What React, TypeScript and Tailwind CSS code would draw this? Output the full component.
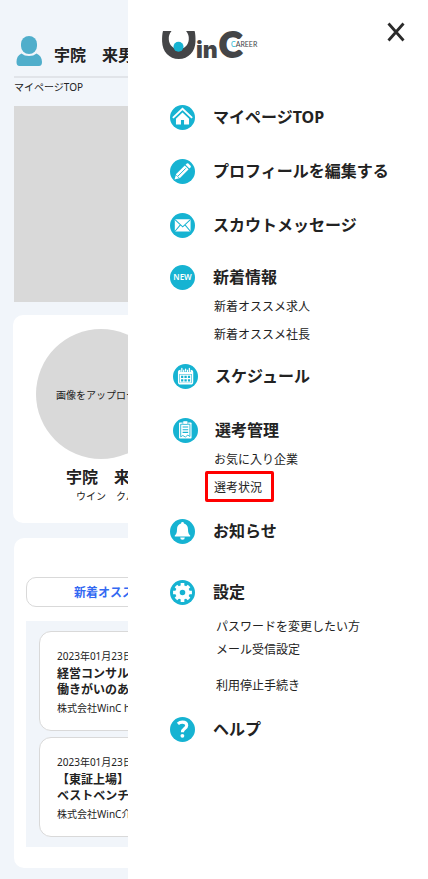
import React from "react";
import clsx from "clsx";

interface SubItem {
    label: string;
    className?: string;
    active?: boolean;
}

interface MenuItem {
    label: string;
    icon: React.ReactNode;
    className: string;
    rowClass?: string;
    sub?: SubItem[];
    subClass?: string;
}

const HomeIcon = () => (
    <svg viewBox="0 0 26 26" className="size-full" fill="none" stroke="#fff">
        <path d="M3 13.4 13 4l10 9.4" strokeWidth="2" />
        <path d="M13 7.8 6.2 14.2V20.200h5.200v-4.600h3.200v4.600h5.200v-6z" fill="#fff" stroke="none" />
    </svg>
);

const PencilIcon = () => (
    <svg viewBox="0 0 26 26" className="size-full" fill="#fff">
        <path d="m16.2 5.900 1.300-1.200a1.200 1.200 0 0 1 1.600 0l2.300 2.300a1.200 1.200 0 0 1 0 1.600l-1.200 1.300z" />
        <path d="m15.400 6.700 4 4-9 9-5.700 1.700 1.700-5.700z" />
        <path d="m16.400 9.700-8 8" stroke="#16b3d2" strokeWidth="1" />
        <path d="m6.400 16.600 3.200 3.200" stroke="#16b3d2" strokeWidth=".8" />
    </svg>
);

const MailIcon = () => (
    <svg viewBox="0 0 26 26" className="size-full">
        <rect x="5" y="6.6" width="16.4" height="12.6" rx="1" fill="#fff" />
        <path d="m5.2 7 8 7.4 8-7.4M5.2 19l5.6-6.6M21.2 19l-5.6-6.6" fill="none" stroke="#16b3d2" strokeWidth="1.100" />
    </svg>
);

const CalendarIcon = () => (
    <svg viewBox="0 0 26 26" className="size-full">
        <rect x="5.900" y="6.600" width="14.400" height="14" rx="2" fill="none" stroke="#fff" strokeWidth="1.500" />
        <path d="M6 7h14.200v3.400H6z" fill="#fff" />
        <path d="M9.200 4v4.400M13.100 4v4.400M17 4v4.400" stroke="#16b3d2" strokeWidth="2.600" />
        <path d="M9.200 4.600v3.200M13.100 5.400v2M17 4.600v3.200" stroke="#fff" strokeWidth="1.300" strokeLinecap="round" />
        <path d="M7.800 11.600h10.600v7.200H7.800zM11.300 11.600v7.200M14.900 11.600v7.200M7.800 15.200h10.600" fill="none" stroke="#fff" strokeWidth="1.200" />
    </svg>
);

const ClipboardIcon = () => (
    <svg viewBox="0 0 26 26" className="size-full">
        <rect x="6.300" y="4.600" width="13" height="16.800" rx=".8" fill="#fff" />
        <path d="M8 6.500h9.600v12.700l-2.200-1.400-2.600 2-2.600-1.600L8 19.600z" fill="#fff" stroke="#16b3d2" strokeWidth=".9" />
        <rect x="10.200" y="3" width="5.200" height="3.600" rx="1" fill="#fff" stroke="#16b3d2" strokeWidth=".6" />
        <path d="M10 9.400h5.800M10 12.200h5.800M10 15h5.800" stroke="#16b3d2" strokeWidth="1.200" />
    </svg>
);

const BellIcon = () => (
    <svg viewBox="0 0 26 26" className="size-full" fill="#fff">
        <path d="M13 3.200a1.500 1.500 0 0 1 1.500 1.500c2.600.6 4.200 2.800 4.200 5.600 0 4 .8 5.600 2.300 6.900v1H5v-1c1.500-1.300 2.300-2.900 2.300-6.900 0-2.800 1.600-5 4.200-5.600A1.500 1.500 0 0 1 13 3.200z" />
        <path d="M10.600 19.200h4.800a2.400 2.400 0 0 1-4.800 0z" />
    </svg>
);

const GearIcon = () => (
    <svg viewBox="0 0 26 26" className="size-full" fill="none" stroke="#fff">
        <circle cx="13" cy="13" r="5.200" strokeWidth="4.600" />
        <path
            d="M13 3.200v4M13 18.800v4M3.200 13h4M18.800 13h4M6.200 6.200 9 9M17 17l2.800 2.800M6.200 19.800 9 17M17 9l2.800-2.800"
            strokeWidth="3.800"
        />
    </svg>
);

const HelpIcon = () => (
    <svg viewBox="0 0 26 26" className="size-full" fill="none" stroke="#fff">
        <path d="M8.200 7.200c1.400-1.300 2.900-1.900 4.700-1.900 2.700 0 4.500 1.300 4.500 3.500 0 3.300-4.500 3.200-4.500 7" strokeWidth="3.200" />
        <circle cx="12.900" cy="19.600" r="2" fill="#fff" stroke="none" />
    </svg>
);

const menu: MenuItem[] = [
    { label: "マイページTOP", icon: <HomeIcon />, className: "" },
    { label: "プロフィールを編集する", icon: <PencilIcon />, className: "mt-7" },
    { label: "スカウトメッセージ", icon: <MailIcon />, className: "mt-7" },
    {
        label: "新着情報",
        icon: <span className="text-[8px] font-semibold text-white">NEW</span>,
        className: "mt-[26px]",
        sub: [{ label: "新着オススメ求人" }, { label: "新着オススメ社長" }],
        subClass: "pl-11",
    },
    { label: "スケジュール", icon: <CalendarIcon />, className: "mt-4", rowClass: "pl-[3px] gap-[17px]" },
    {
        label: "選考管理",
        icon: <ClipboardIcon />,
        className: "mt-7",
        rowClass: "pl-[3px] gap-[17px]",
        sub: [{ label: "お気に入り企業" }, { label: "選考状況", active: true }],
        subClass: "pl-11",
    },
    { label: "お知らせ", icon: <BellIcon />, className: "mt-[18px]" },
    {
        label: "設定",
        icon: <GearIcon />,
        className: "mt-[35px]",
        sub: [
            { label: "パスワードを変更したい方", className: "mt-[5px]" },
            { label: "メール受信設定", className: "-mt-[5px]" },
            { label: "利用停止手続き", className: "mt-2" },
        ],
        subClass: "pl-[46px]",
    },
    { label: "ヘルプ", icon: <HelpIcon />, className: "mt-[18px]" },
];

const jobs = [
    { date: "2023年01月23日", title: ["経営コンサルタント", "働きがいのある会社"], company: "株式会社WinC holdings" },
    { date: "2023年01月23日", title: ["【東証上場】", "ベストベンチャー"], company: "株式会社WinC介護" },
];

const Logo = () => (
    <svg width="98" height="32" viewBox="0 0 98 32" role="img" aria-label="WinC CAREER">
        <path
            d="M1 3h8.500C7.400 5.500 6.600 8 6.800 11.500 7.200 17 11 21 16.800 21s9.600-4 10-9.500C27 8 26.200 5.500 24.100 3h8.500c.8 3 1 6 .9 10.500C33.300 23.500 26.500 31 16.800 31S.3 23.500.1 13.500C0 9 .2 6 1 3z"
            fill="#444547"
        />
        <circle cx="16.500" cy="18.800" r="5" fill="#16b3d2" />
        <text x="34" y="30" fontSize="23" fontWeight="900" fill="#444547" fontFamily="Inter, sans-serif">in</text>
        <text x="57" y="29" fontSize="35" fontWeight="900" fill="#444547" stroke="#444547" strokeWidth="1.800" fontFamily="Lato, sans-serif">C</text>
        <text x="69" y="19" fontSize="7" fill="#444547" fontFamily="Lato, sans-serif">
            <tspan fill="#16b3d2">C</tspan>AREER
        </text>
    </svg>
);

const MyPage: React.FC = () => (
    <div className="w-screen whitespace-nowrap pl-[14px] pr-[14px] pt-9">
        <header className="flex gap-3 border-b-2 border-[#e1e4e9] pb-[9px]">
            <svg width="28" height="30" viewBox="0 0 28 30" fill="#50aecb" aria-hidden="true">
                <rect x="7" y="0" width="16" height="18" rx="8" />
                <path d="M7.500 17.500c2 1.700 4.500 2.500 7.500 2.500s5.500-.8 7.500-2.500c3.500 1.500 5.500 4.500 5.500 8.500 0 2.500-1 4-3 4H5.500c-2 0-3-1.500-3-4 0-4 1.500-7 5-8.500z" />
            </svg>
            <p className="pt-[7px] text-base leading-6 font-bold">宇院　来男</p>
        </header>
        <p className="mt-px text-[10px] leading-4">マイページTOP</p>
        <div className="mt-[11px] h-[196px] bg-[#d9d9d9]" />

        <section className="mt-[13px] -ml-px rounded-[10px] bg-white px-[23px] pt-[14px] pb-5">
            <button className="flex size-[130px] items-center rounded-full bg-[#d9d9d9] pt-[2px] pl-5 text-[10px] leading-4">
                画像をアップロード
            </button>
            <h2 className="mt-[6px] pl-[30px] text-base leading-6 font-bold">宇院　来男</h2>
            <p className="pl-10 text-[10px] leading-[14px]">ウイン　クルオ</p>
        </section>

        <section className="mt-[15px] rounded-[10px] bg-white px-3 pt-[39px] pb-[21px]">
            <button className="flex h-[30px] w-full items-center rounded-[10px] border border-[#d9d9d9] pt-px pl-[47px] text-xs font-bold text-[#3369f2]">
                新着オススメ
            </button>
            <div className="mt-[14px] flex flex-col gap-[6px] bg-[#f1f5fa] px-[13px] py-[10px]">
                {jobs.map((job) => (
                    <article key={job.title[0]} className="rounded-xl border border-[#d9d9d9] bg-white px-[17px] pt-4 pb-[14px]">
                        <p className="text-[10px] leading-4">{job.date}</p>
                        <h3 className="mt-[2px] text-xs leading-4 font-bold">
                            {job.title.map((line) => (
                                <span key={line} className="block">{line}</span>
                            ))}
                        </h3>
                        <p className="mt-[2px] text-[10px] leading-4">{job.company}</p>
                    </article>
                ))}
            </div>
        </section>
    </div>
);

const Drawer: React.FC = () => (
    <aside className="min-w-0 flex-1 bg-white">
        <div className="flex items-start justify-between pt-5 pr-5 pl-[34px]">
            <div className="pt-2">
                <Logo />
            </div>
            <button aria-label="閉じる" className="flex size-6 items-center justify-center">
                <svg width="18" height="20" viewBox="0 0 18 20" stroke="#2b2b2b" strokeWidth="2.800" aria-hidden="true">
                    <path d="m1.500 1.500 15 17M16.500 1.500l-15 17" />
                </svg>
            </button>
        </div>

        <nav className="mt-11 pl-[42px]">
            <ul>
                {menu.map((item) => (
                    <li key={item.label} className={item.className}>
                        <a href="#" className={clsx("flex items-center text-base leading-[26px] font-bold", item.rowClass ?? "gap-[18px]")}>
                            <span className="flex size-[25px] shrink-0 items-center justify-center rounded-full bg-[#16b3d2]">
                                {item.icon}
                            </span>
                            {item.label}
                        </a>
                        {item.sub && (
                            <ul className={clsx("pt-px", item.subClass)}>
                                {item.sub.map((s) => (
                                    <li key={s.label} className={clsx("flex h-7 items-center text-xs leading-4", s.className)}>
                                        <a
                                            href="#"
                                            className={clsx(
                                                "pt-1",
                                                s.active && "-ml-[9px] flex h-[31px] shrink-0 items-center rounded-xs border-3 border-[#ff0000] pr-[9px] pl-[6px]"
                                            )}
                                        >
                                            {s.label}
                                        </a>
                                    </li>
                                ))}
                            </ul>
                        )}
                    </li>
                ))}
            </ul>
        </nav>
    </aside>
);

export default function App() {
    return (
        <div className="flex min-h-screen bg-[#f1f5fa] font-['Noto_Sans','Noto_Sans_CJK_JP',sans-serif] text-[#222]">
            <div className="w-32 shrink-0 overflow-hidden">
                <MyPage />
            </div>
            <Drawer />
        </div>
    );
}
